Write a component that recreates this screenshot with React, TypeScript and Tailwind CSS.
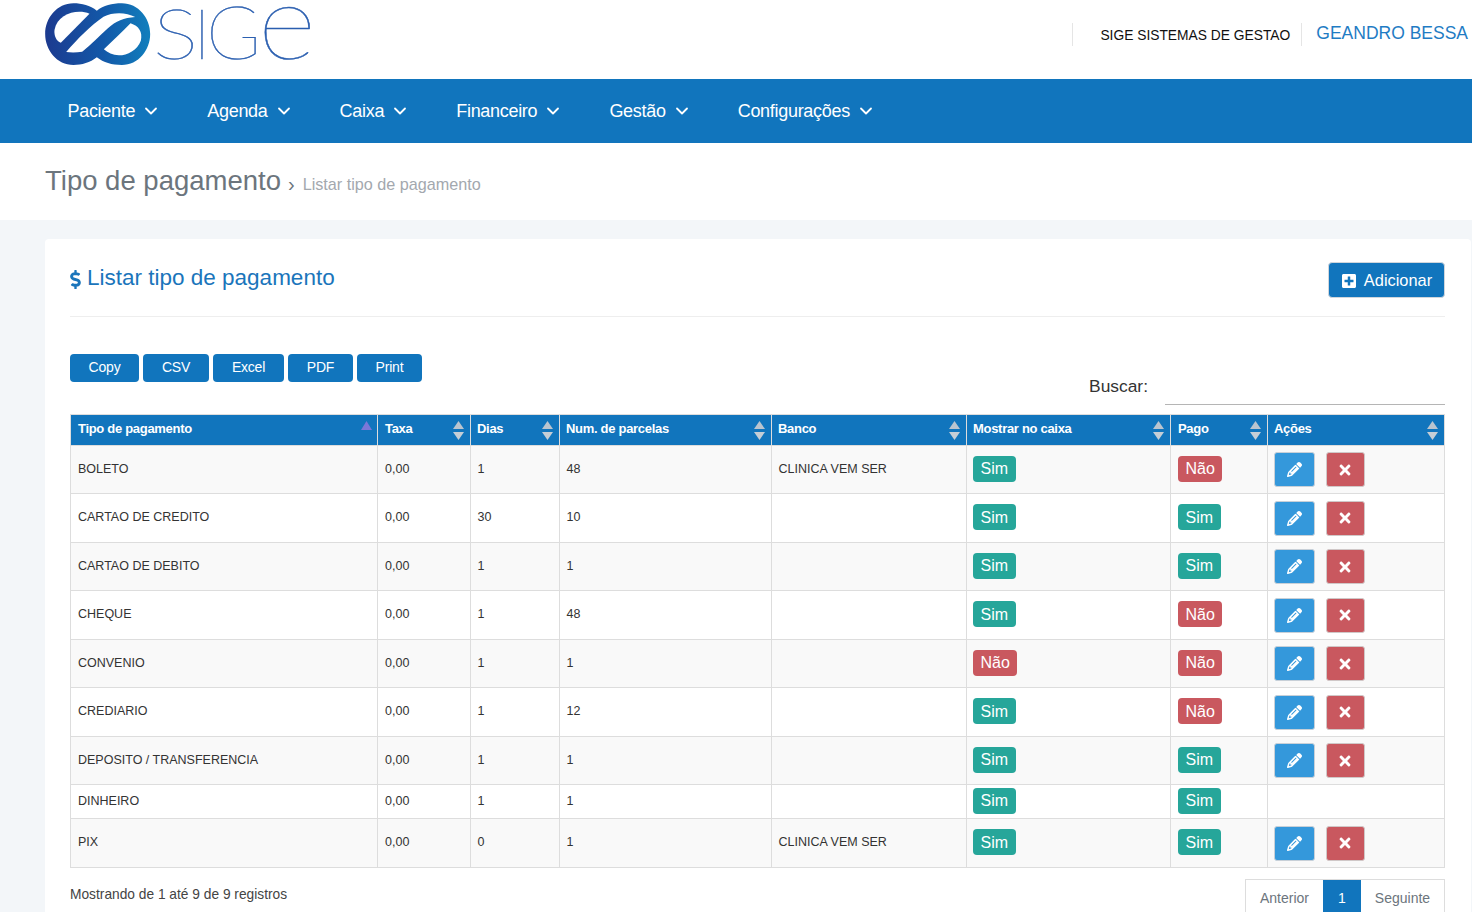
import React from 'react';
import { FaDollarSign, FaPlusSquare, FaTimes } from 'react-icons/fa';
import { FaPencil } from 'react-icons/fa6';
import { ChevronDown } from 'lucide-react';

const menus = ['Paciente', 'Agenda', 'Caixa', 'Financeiro', 'Gestão', 'Configurações'];
const exportButtons = [
  { label: 'Copy', w: 'w-[69px]' },
  { label: 'CSV', w: 'w-[66px]' },
  { label: 'Excel', w: 'w-[71px]' },
  { label: 'PDF', w: 'w-[65px]' },
  { label: 'Print', w: 'w-[65px]' },
];
const columns = [
  { label: 'Tipo de pagamento', w: 'w-[307px]' },
  { label: 'Taxa', w: 'w-[93px]' },
  { label: 'Dias', w: 'w-[89px]' },
  { label: 'Num. de parcelas', w: 'w-[212px]' },
  { label: 'Banco', w: 'w-[195px]' },
  { label: 'Mostrar no caixa', w: 'w-[204px]' },
  { label: 'Pago', w: 'w-[97px]' },
  { label: 'Ações', w: 'w-[177px]' },
];
const rows = [
  { tipo: 'BOLETO', dias: '1', parcelas: '48', banco: 'CLINICA VEM SER', caixa: true, pago: false, acoes: true, h: 'h-[48.5px]' },
  { tipo: 'CARTAO DE CREDITO', dias: '30', parcelas: '10', banco: '', caixa: true, pago: true, acoes: true, h: 'h-[48.5px]' },
  { tipo: 'CARTAO DE DEBITO', dias: '1', parcelas: '1', banco: '', caixa: true, pago: true, acoes: true, h: 'h-[48.5px]' },
  { tipo: 'CHEQUE', dias: '1', parcelas: '48', banco: '', caixa: true, pago: false, acoes: true, h: 'h-[48.5px]' },
  { tipo: 'CONVENIO', dias: '1', parcelas: '1', banco: '', caixa: false, pago: false, acoes: true, h: 'h-[48.5px]' },
  { tipo: 'CREDIARIO', dias: '1', parcelas: '12', banco: '', caixa: true, pago: false, acoes: true, h: 'h-[48.5px]' },
  { tipo: 'DEPOSITO / TRANSFERENCIA', dias: '1', parcelas: '1', banco: '', caixa: true, pago: true, acoes: true, h: 'h-[48.5px]' },
  { tipo: 'DINHEIRO', dias: '1', parcelas: '1', banco: '', caixa: true, pago: true, acoes: false, h: 'h-[34px]' },
  { tipo: 'PIX', dias: '0', parcelas: '1', banco: 'CLINICA VEM SER', caixa: true, pago: true, acoes: true, h: 'h-[49px]' },
];

function Logo() {
  return (
    <div className="flex items-start">
      <svg width="107" height="64" viewBox="15 9 320 192" className="mt-[1px] shrink-0">
        <defs>
          <linearGradient id="logoGrad" x1="0" y1="0" x2="1" y2="0">
            <stop offset="0" stopColor="#1c3a8f" />
            <stop offset="0.55" stopColor="#1358a8" />
            <stop offset="1" stopColor="#117fbd" />
          </linearGradient>
        </defs>
        <path
          d="M170 32C150 16 125 10 100 10C50 10 15 55 15 102C15 150 50 195 100 195C125 195 150 188 170 172C190 188 215 195 245 195C295 195 330 150 330 102C330 55 295 10 245 10C215 10 190 16 170 32Z"
          fill="url(#logoGrad)"
        />
        <path d="M148 41C112 26 52 40 43 90C41 108 49 124 62 128Z" fill="#ffffff" />
        <path d="M78 156C112 116 152 76 190 50C218 36 258 36 285 51C252 53 226 64 204 84C178 108 152 134 126 155C110 158 92 158 78 156Z" fill="#ffffff" />
        <path d="M191 148C218 122 246 96 271 70C296 78 308 96 302 122C292 150 262 166 236 166C218 165 202 158 191 148Z" fill="#ffffff" />
      </svg>
      <div className="ml-[1.4px] mt-[-20px] flex h-[74px] items-baseline font-['Lato',sans-serif] font-thin text-[#2b5fb0] [-webkit-text-stroke:0.5px_#2b5fb0]">
        <span className="inline-block origin-left scale-x-[1.2] text-[71px] leading-[74px]">S</span>
        <span className="ml-[2.4px] text-[71px] leading-[74px]">I</span>
        <span className="ml-[-4.4px] text-[74px] leading-[74px]">G</span>
        <span className="ml-[-3px] inline-block origin-left scale-x-[1.08] text-[104px] leading-[74px]">e</span>
      </div>
    </div>
  );
}

function SortIcon({ active }: { active?: boolean }) {
  if (active) {
    return (
      <svg className="absolute right-[5px] top-[6px]" width="11" height="9" viewBox="0 0 11 9">
        <path d="M5.5 0L11 9H0Z" fill="#7a77d8" />
      </svg>
    );
  }
  return (
    <svg className="absolute right-[6px] top-[6px]" width="11" height="19" viewBox="0 0 11 19">
      <path d="M5.5 0L11 8H0Z" fill="#b9c4cf" />
      <path d="M5.5 19L0 11H11Z" fill="#c5ced6" />
    </svg>
  );
}

function Badge({ ok }: { ok: boolean }) {
  return (
    <span className={`mb-[1.5px] inline-flex h-[26px] items-center rounded-[4px] px-[7.5px] pt-[1px] align-middle text-[16px] text-white ${ok ? 'bg-[#26a69a]' : 'bg-[#c9585f]'}`}>
      {ok ? 'Sim' : 'Não'}
    </span>
  );
}

function App() {
  return (
    <div className="h-screen overflow-hidden bg-[#f3f6f9] font-['Liberation_Sans',Arial,sans-serif]">
      <header className="flex h-[79px] items-start justify-between bg-white pl-[45px] pr-[4px] pt-[2px]">
        <Logo />
        <div className="mt-[21px] flex h-[23px] items-start">
          <div className="flex h-[23px] items-center border-l border-[#e5e5e5] pl-[27px] pr-[11px] pt-[3px] text-[13.8px] text-[#111]">
            SIGE SISTEMAS DE GESTAO
          </div>
          <div className="flex h-[23px] items-center border-l border-[#e5e5e5] pl-[14px] pb-[3px] text-[17.5px] text-[#1f7cc4]">
            GEANDRO BESSA
          </div>
        </div>
      </header>

      <nav className="flex h-[64px] items-center gap-[46.1px] bg-[#1175bd] pl-[67.5px] text-[18px] text-white">
        {menus.map((m) => (
          <div key={m} className="flex items-center gap-[6px]">
            <span className="tracking-[-0.3px]">{m}</span>
            <ChevronDown size={20} strokeWidth={2.2} />
          </div>
        ))}
      </nav>

      <div className="flex h-[77px] items-center bg-white pl-[45px]">
        <h1 className="mt-[-2px] text-[27.5px] text-[#6c757d]">Tipo de pagamento</h1>
        <span className="ml-[7px] mt-[4px] text-[20px] text-[#6c757d]">›</span>
        <span className="ml-[8px] mt-[6px] text-[16.2px] text-[#a3a8ae]">Listar tipo de pagamento</span>
      </div>

      <main className="ml-[45px] mr-[1px] mt-[19px] rounded-t-[4px] bg-white pl-[25px] pr-[26px]">
        <div className="flex h-[78px] justify-between border-b border-[#eeeeee]">
          <h2 className="flex h-[78px] items-start gap-[2.5px] pt-[24.5px] text-[22.5px] leading-[28px] text-[#1a75bb]">
            <FaDollarSign size={19} className="ml-[-4.5px] mt-[6px]" />
            Listar tipo de pagamento
          </h2>
          <button className="mt-[23px] flex h-[36px] w-[117px] items-center justify-center gap-[7px] rounded-[4px] border border-[#d0d6dc] bg-[#1175bd] pt-[1px] text-[16.4px] text-white">
            <FaPlusSquare size={16} />
            Adicionar
          </button>
        </div>

        <div className="flex h-[97px] justify-between">
          <div className="mt-[37px] flex h-[28px] gap-[4px] self-start">
            {exportButtons.map((b) => (
              <button key={b.label} className={`${b.w} rounded-[4px] bg-[#1175bd] pb-[2px] text-[14px] tracking-[-0.2px] text-white`}>
                {b.label}
              </button>
            ))}
          </div>
          <div className="mt-[59px] flex h-[29px] items-start">
            <label className="mr-[17px] mt-[-3px] text-[17.4px] text-[#333]">Buscar:</label>
            <div className="h-[29px] w-[280px] border-b border-[#b5b5b5]" />
          </div>
        </div>

        <table className="w-[1375px] table-fixed border-collapse border border-[#dddddd] text-[12.5px] text-[#333]">
          <colgroup>
            {columns.map((c) => (
              <col key={c.label} className={c.w} />
            ))}
          </colgroup>
          <thead>
            <tr className="h-[30.5px] bg-[#1175bd] text-left text-white">
              {columns.map((c, i) => (
                <th key={c.label} className={`relative border-x border-[#dddddd] pb-[3px] pr-[7px] text-[13px] font-bold tracking-[-0.3px] ${i < 2 || i === 6 ? 'pl-[7px]' : 'pl-[6px]'}`}>
                  {c.label}
                  <SortIcon active={i === 0} />
                </th>
              ))}
            </tr>
          </thead>
          <tbody>
            {rows.map((r, i) => (
              <tr key={r.tipo} className={`${r.h} ${i % 2 === 0 ? 'bg-[#f9f9f9]' : 'bg-white'}`}>
                <td className="border border-[#dddddd] pb-[0.5px] pl-[7px] pr-[7px]">{r.tipo}</td>
                <td className="border border-[#dddddd] pb-[0.5px] pl-[7px] pr-[7px]">0,00</td>
                <td className="border border-[#dddddd] pb-[0.5px] pl-[6.5px] pr-[7px]">{r.dias}</td>
                <td className="border border-[#dddddd] pb-[0.5px] pl-[6.5px] pr-[7px]">{r.parcelas}</td>
                <td className="border border-[#dddddd] pb-[0.5px] pl-[6.5px] pr-[7px]">{r.banco}</td>
                <td className="border border-[#dddddd] pl-[6px] pr-[6px]">
                  <Badge ok={r.caixa} />
                </td>
                <td className="border border-[#dddddd] pl-[7px] pr-[7px]">
                  <Badge ok={r.pago} />
                </td>
                <td className="border border-[#dddddd] pl-[6px] pr-[7px] pt-[0.5px]">
                  {r.acoes && (
                    <div className="flex gap-[10.5px]">
                      <button className="flex h-[35px] w-[41px] items-center justify-center rounded-[3px] border border-[#c8d0d8] bg-[#3498db] text-white">
                        <FaPencil size={15} />
                      </button>
                      <button className="flex h-[35px] w-[39px] items-center justify-center rounded-[3px] border border-[#d0c8c8] bg-[#c9585f] text-white">
                        <FaTimes size={16} />
                      </button>
                    </div>
                  )}
                </td>
              </tr>
            ))}
          </tbody>
        </table>

        <div className="flex items-start justify-between pt-[11px]">
          <p className="mt-[6px] text-[13.75px] text-[#444]">Mostrando de 1 até 9 de 9 registros</p>
          <div className="flex h-[40px] border border-[#dddddd] text-[14px] text-[#6c757d]">
            <span className="flex w-[77px] items-center justify-center pb-[2px]">Anterior</span>
            <span className="flex w-[38px] items-center justify-center bg-[#1175bd] pb-[2px] text-white">1</span>
            <span className="flex w-[83px] items-center justify-center pb-[2px]">Seguinte</span>
          </div>
        </div>
      </main>
    </div>
  );
}

export default App;
